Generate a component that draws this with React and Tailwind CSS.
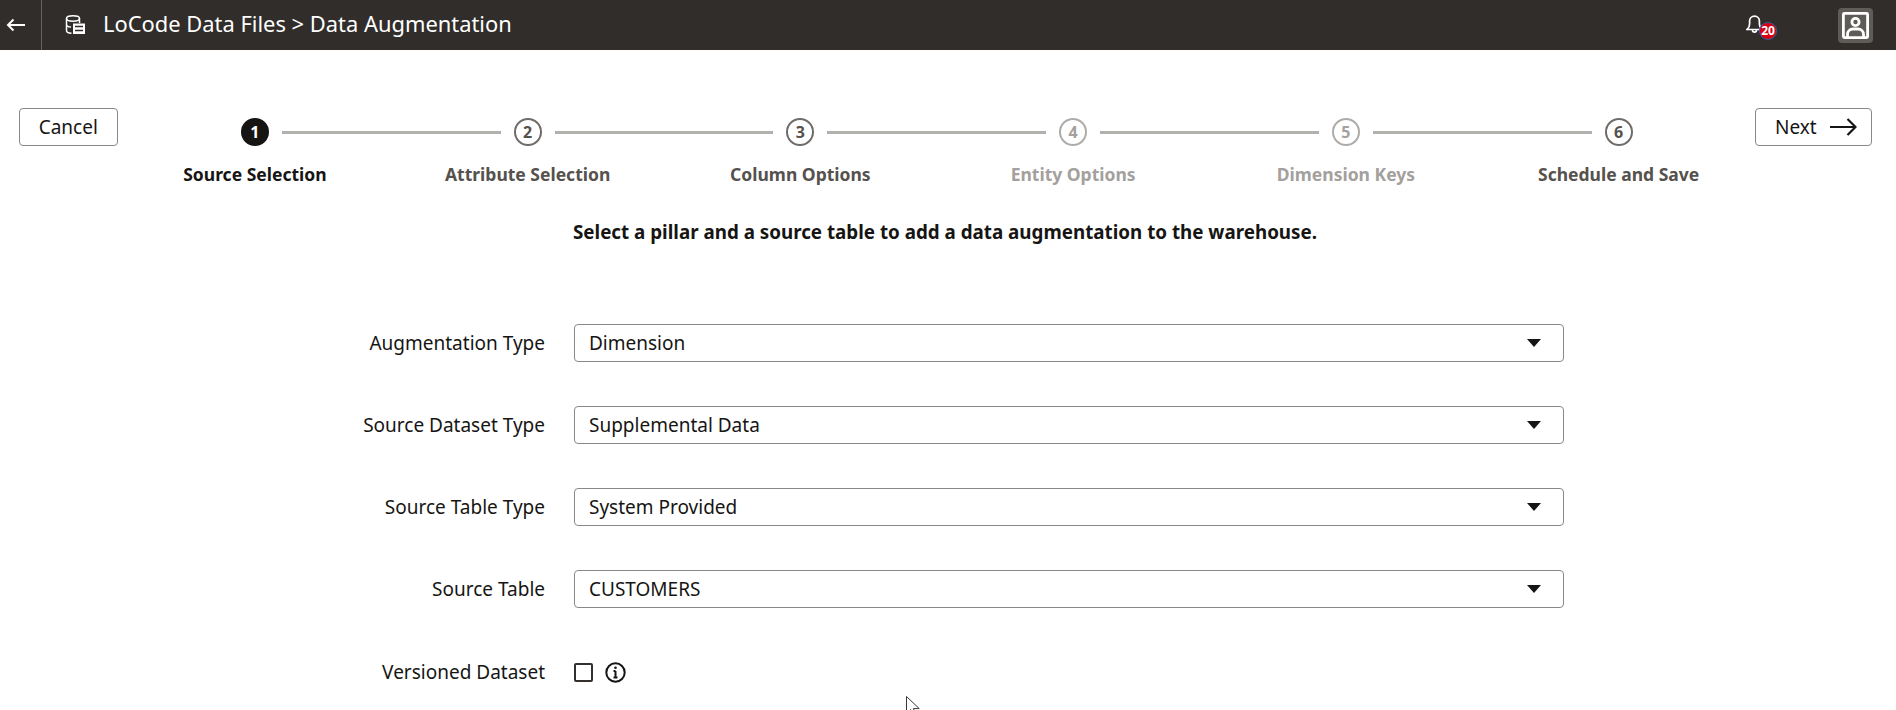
import React from 'react';

const font = "font-['Noto_Sans','Open_Sans',sans-serif]";

const steps = [
  { n: 1, label: 'Source Selection', state: 'active' },
  { n: 2, label: 'Attribute Selection', state: 'normal' },
  { n: 3, label: 'Column Options', state: 'normal' },
  { n: 4, label: 'Entity Options', state: 'disabled' },
  { n: 5, label: 'Dimension Keys', state: 'disabled' },
  { n: 6, label: 'Schedule and Save', state: 'normal' },
];

const fields = [
  { label: 'Augmentation Type', value: 'Dimension' },
  { label: 'Source Dataset Type', value: 'Supplemental Data' },
  { label: 'Source Table Type', value: 'System Provided' },
  { label: 'Source Table', value: 'CUSTOMERS' },
];

const circleStyles = {
  active: 'bg-[#161513] border-[#161513] text-white',
  normal: 'bg-white border-[#6f6c69] text-[#55514d]',
  disabled: 'bg-white border-[#aeaba8] text-[#a3a09d]',
};

const labelStyles = {
  active: 'text-[#161513]',
  normal: 'text-[#55514d]',
  disabled: 'text-[#a3a09d]',
};

const BackArrow = () => (
  <svg width="20" height="14" viewBox="0 0 20 14" fill="none" stroke="white" strokeWidth="2">
    <path d="M19 7H2M7.5 1.5 2 7l5.5 5.5" />
  </svg>
);

const DataIcon = () => (
  <svg width="21" height="20" viewBox="0 0 21 20" fill="none" stroke="white" strokeWidth="1.5">
    <ellipse cx="8" cy="3.5" rx="6.5" ry="2.7" />
    <path d="M1.5 3.5v12c0 1.5 2.2 2.6 5 2.7M14.5 3.5V8M1.5 9.5c0 1.3 1.8 2.4 4.5 2.6" />
    <rect x="8" y="8.5" width="12" height="10.5" fill="white" stroke="none" />
    <path d="M10 11.5h8M10 15.5h8" stroke="#312d2a" strokeWidth="1.6" />
  </svg>
);

const BellIcon = () => (
  <svg width="17" height="21" viewBox="0 0 17 21" fill="none" stroke="white" strokeWidth="1.7">
    <path d="M1 15.5h15c-1.8-1.4-2.6-3-2.6-5.5V7a4.9 4.9 0 0 0-9.8 0v3c0 2.5-.8 4.1-2.6 5.5Z" />
    <path d="M6.5 16c0 2.8 4 2.8 4 0" />
  </svg>
);

const UserIcon = () => (
  <svg width="27" height="27" viewBox="0 0 27 27" fill="none" stroke="white" strokeWidth="2.8">
    <rect x="1.4" y="1.4" width="24.2" height="24.2" rx="1" />
    <circle cx="13.5" cy="10" r="3.6" />
    <path d="M5.5 25v-2.5c0-3.5 2.5-5.5 5.5-5.5h5c3 0 5.5 2 5.5 5.5V25" />
  </svg>
);

const NextArrow = () => (
  <svg width="27" height="18" viewBox="0 0 27 18" fill="none" stroke="#161513" strokeWidth="2.2">
    <path d="M0 9h25.5M17.5 1l8 8-8 8" />
  </svg>
);

const Caret = () => (
  <svg width="14" height="8" viewBox="0 0 14 8" fill="#161513">
    <path d="M0 0h14L7 8Z" />
  </svg>
);

const InfoIcon = () => (
  <svg width="21" height="21" viewBox="0 0 21 21" fill="none" stroke="#161513" strokeWidth="2">
    <circle cx="10.5" cy="10.5" r="9.2" />
    <path d="M10.5 9v6.5M8.5 9h2M8.5 15.5h4" />
    <circle cx="10.5" cy="5.8" r="1.3" fill="#161513" stroke="none" />
  </svg>
);

const Step = ({ step, index }) => (
  <div className="flex w-[273px] flex-col items-center">
    <div className="flex w-full items-center">
      <div className="flex-1 pr-[13px]">
        {index > 0 && <div className="h-[3px] bg-[#b3b1ae]"></div>}
      </div>
      <div
        className={`flex h-[28px] w-[28px] items-center justify-center rounded-full border-2 text-[16px] leading-none font-bold ${circleStyles[step.state]}`}
      >
        {step.n}
      </div>
      <div className="flex-1 pl-[13px]">
        {index < steps.length - 1 && <div className="h-[3px] bg-[#b3b1ae]"></div>}
      </div>
    </div>
    <div className={`mt-[16px] text-[17.5px] leading-[24px] font-bold whitespace-nowrap ${labelStyles[step.state]}`}>
      {step.label}
    </div>
  </div>
);

const Field = ({ label, value }) => (
  <div className="flex items-center gap-[29px]">
    <label className="w-[400px] text-right text-[19px] leading-[26px] text-[#161513]">{label}</label>
    <div className="flex h-[38px] w-[990px] items-center justify-between rounded-[4px] border border-[#8b8986] pr-[22px] pl-[14px] text-[19px] leading-[26px] text-[#161513]">
      <span>{value}</span>
      <Caret />
    </div>
  </div>
);

export default function App() {
  return (
    <div className={`relative h-[710px] overflow-hidden bg-white ${font}`}>
      <header className="flex h-[50px] items-center bg-[#312d2a] text-white">
        <div className="flex h-full w-[42px] items-center border-r border-[#67635f] pl-[6px]">
          <BackArrow />
        </div>
        <div className="ml-[23px]">
          <DataIcon />
        </div>
        <h1 className="ml-[17px] pb-[2px] text-[21.9px] leading-[30px] whitespace-nowrap">LoCode Data Files &gt; Data Augmentation</h1>
        <div className="relative ml-auto mr-[75px] -mt-[2px]">
          <BellIcon />
          <span className="absolute -right-[14px] top-[8px] flex h-[18px] w-[18px] items-center justify-center rounded-full border border-[#2f5f9e] bg-[#d80012] text-[12px] leading-none font-bold text-white">
            20
          </span>
        </div>
        <div className="mr-[23px] flex h-[35px] w-[35px] items-center justify-center rounded-[4px] bg-[#5f5b57]">
          <UserIcon />
        </div>
      </header>

      <div className="mt-[58px] flex items-start pr-[24px] pl-[19px]">
        <button className="h-[38px] w-[98.5px] shrink-0 rounded-[4px] border border-[#8b8986] text-[19px] leading-[26px] text-[#161513]">
          Cancel
        </button>
        <div className="flex min-w-0 flex-1 pt-[10px] pl-[1px]">
          {steps.map((step, i) => (
            <Step key={step.n} step={step} index={i} />
          ))}
        </div>
        <button className="flex h-[38px] w-[117px] shrink-0 items-center gap-[13px] rounded-[4px] border border-[#8b8986] pl-[19px] text-[19px] leading-[26px] text-[#161513]">
          Next
          <NextArrow />
        </button>
      </div>

      <p className="mt-[32px] pr-[6px] text-center text-[18.8px] leading-[28px] font-bold text-[#161513]">
        Select a pillar and a source table to add a data augmentation to the warehouse.
      </p>

      <div className="mt-[78px] ml-[145px] flex flex-col gap-[44px]">
        {fields.map((f) => (
          <Field key={f.label} label={f.label} value={f.value} />
        ))}
      </div>

      <div className="mt-[45px] ml-[145px] flex h-[38px] items-center gap-[29px]">
        <label className="w-[400px] text-right text-[19px] leading-[26px] text-[#161513]">Versioned Dataset</label>
        <div className="flex items-center gap-[12px]">
          <div className="h-[19px] w-[19px] rounded-[2px] border-2 border-[#33302d] bg-white"></div>
          <InfoIcon />
        </div>
      </div>

      <svg
        className="absolute top-[696px] left-[906px]"
        width="16"
        height="22"
        viewBox="0 0 16 22"
        fill="white"
        stroke="#3b3835"
        strokeWidth="1"
      >
        <path d="M.5.5v17l4.2-4 2.8 6.5 2.6-1.1L7.4 12.6h5.8Z" />
      </svg>
    </div>
  );
}
